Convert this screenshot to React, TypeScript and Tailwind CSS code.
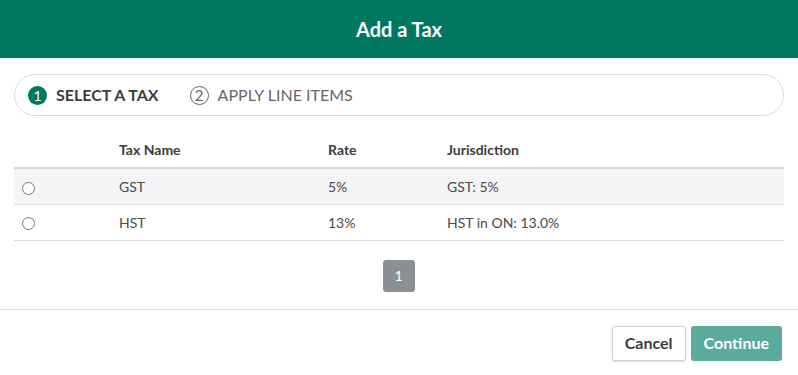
import React, { useState } from "react";

const taxes = [
  { name: "GST", rate: "5%", jurisdiction: "GST: 5%" },
  { name: "HST", rate: "13%", jurisdiction: "HST in ON: 13.0%" },
];

const App = () => {
  const [selected, setSelected] = useState<string>("");

  return (
    <div className="w-[798px] h-[375px] bg-white text-[#4a4a4a] font-['Lato',sans-serif] flex flex-col">
      <div className="h-[58px] bg-[#00785f] flex items-center justify-center">
        <h2 className="text-white text-[20px] font-bold">Add a Tax</h2>
      </div>

      <div className="px-[14px] pt-[16px]">
        <div className="h-[42px] border border-[#dcdcdc] rounded-full flex items-center pl-[13px]">
          <span className="w-[19px] h-[19px] rounded-full bg-[#00785f] text-white text-[14px] flex items-center justify-center">1</span>
          <span className="ml-[9px] text-[16px] font-bold text-[#3d3d3d]">SELECT A TAX</span>
          <span className="ml-[31px] w-[19px] h-[19px] rounded-full border border-[#666] text-[#666] text-[15px] flex items-center justify-center">2</span>
          <span className="ml-[9px] text-[16px] text-[#666]">APPLY LINE ITEMS</span>
        </div>

        <table className="w-full mt-[16px] text-[14px] border-collapse">
          <thead>
            <tr className="h-[36px] border-b-2 border-[#d6d8db] text-left">
              <th className="w-[105px]"></th>
              <th className="w-[209px] font-bold text-[#3d3d3d]">Tax Name</th>
              <th className="w-[119px] font-bold text-[#3d3d3d]">Rate</th>
              <th className="font-bold text-[#3d3d3d]">Jurisdiction</th>
            </tr>
          </thead>
          <tbody>
            {taxes.map((t, i) => (
              <tr key={t.name} className={`h-[36px] border-b border-[#dcdde0] ${i === 0 ? "bg-[#f5f5f7]" : ""}`}>
                <td className="pl-[8px]">
                  <input
                    type="radio"
                    name="tax"
                    checked={selected === t.name}
                    onChange={() => setSelected(t.name)}
                    className="w-[13px] h-[13px] align-middle appearance-none rounded-full border border-[#777] bg-white"
                  />
                </td>
                <td>{t.name}</td>
                <td>{t.rate}</td>
                <td>{t.jurisdiction}</td>
              </tr>
            ))}
          </tbody>
        </table>

        <div className="flex justify-center mt-[19px]">
          <button className="w-[32px] h-[32px] -ml-[1px] rounded-[3px] bg-[#8a9196] text-white text-[14px]">1</button>
        </div>
      </div>

      <div className="mt-[17px] border-t border-[#dcdcdc] flex justify-end gap-[5px] px-[16px] pt-[16px]">
        <button className="h-[35px] px-[12px] border border-[#cfcfcf] rounded-[3px] bg-white text-[16px] font-bold text-[#3d3d3d] shadow-sm">Cancel</button>
        <button className="h-[35px] px-[13px] rounded-[3px] bg-[#5aab9b] text-[16px] font-bold text-white">Continue</button>
      </div>
    </div>
  );
};

export default App;
